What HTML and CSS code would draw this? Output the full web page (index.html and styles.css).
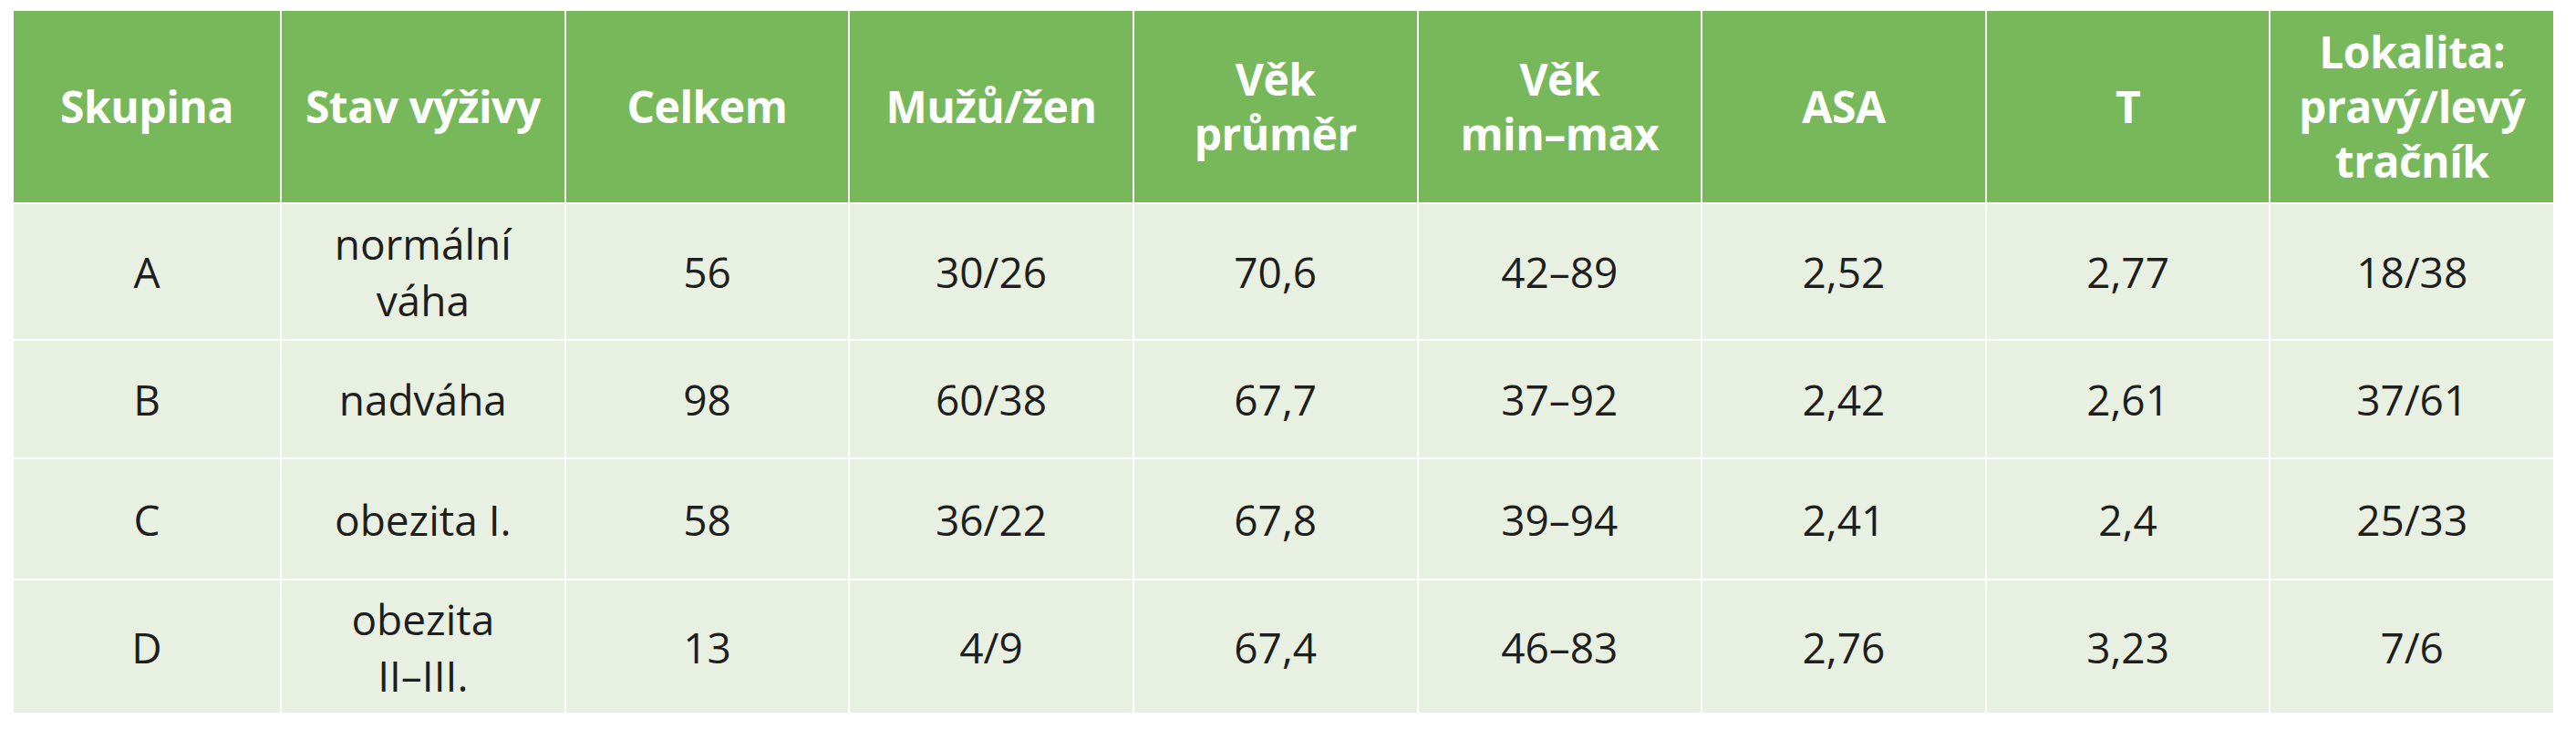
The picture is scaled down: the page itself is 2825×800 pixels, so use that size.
FILE: index.html
```html
<!DOCTYPE html>
<html lang="cs">
<head>
<meta charset="utf-8">
<title>Tabulka</title>
<link rel="stylesheet" href="styles.css">
</head>
<body>
<div class="table">
  <div class="cell head">Skupina</div>
  <div class="cell head">Stav výživy</div>
  <div class="cell head">Celkem</div>
  <div class="cell head">Mužů/žen</div>
  <div class="cell head">Věk<br>průměr</div>
  <div class="cell head">Věk<br>min–max</div>
  <div class="cell head">ASA</div>
  <div class="cell head">T</div>
  <div class="cell head">Lokalita:<br>pravý/levý<br>tračník</div>

  <div class="cell">A</div>
  <div class="cell">normální<br>váha</div>
  <div class="cell">56</div>
  <div class="cell">30/26</div>
  <div class="cell">70,6</div>
  <div class="cell">42–89</div>
  <div class="cell">2,52</div>
  <div class="cell">2,77</div>
  <div class="cell">18/38</div>

  <div class="cell">B</div>
  <div class="cell">nadváha</div>
  <div class="cell">98</div>
  <div class="cell">60/38</div>
  <div class="cell">67,7</div>
  <div class="cell">37–92</div>
  <div class="cell">2,42</div>
  <div class="cell">2,61</div>
  <div class="cell">37/61</div>

  <div class="cell">C</div>
  <div class="cell">obezita I.</div>
  <div class="cell">58</div>
  <div class="cell">36/22</div>
  <div class="cell">67,8</div>
  <div class="cell">39–94</div>
  <div class="cell">2,41</div>
  <div class="cell">2,4</div>
  <div class="cell">25/33</div>

  <div class="cell">D</div>
  <div class="cell">obezita<br>II–III.</div>
  <div class="cell">13</div>
  <div class="cell">4/9</div>
  <div class="cell">67,4</div>
  <div class="cell">46–83</div>
  <div class="cell">2,76</div>
  <div class="cell">3,23</div>
  <div class="cell">7/6</div>
</div>
</body>
</html>
```

FILE: styles.css
```css
html, body {
  margin: 0;
  background: #ffffff;
}

body {
  padding: 12px 0 0 15px;
  font-family: "Open Sans", "Noto Sans", "DejaVu Sans", sans-serif;
}

.table {
  display: grid;
  width: 2785px;
  grid-template-columns: 292px repeat(8, 1fr);
  grid-template-rows: 210px 148px 128px 131px 145px;
  gap: 2px;
  background: #ffffff;
}

.cell {
  display: flex;
  align-items: center;
  justify-content: center;
  text-align: center;
  background: #e8f1e1;
  color: #1e1e1e;
  font-size: 46px;
  line-height: 62px;
  white-space: nowrap;
}

.head {
  background: #77b95a;
  color: #ffffff;
  font-size: 48px;
  font-weight: 700;
  line-height: 60px;
  letter-spacing: -0.5px;
}
```
